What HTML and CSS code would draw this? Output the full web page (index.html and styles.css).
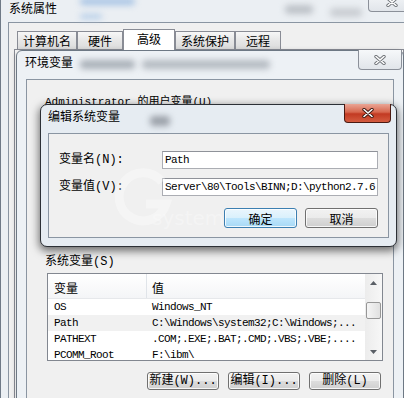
FILE: index.html
```html
<!DOCTYPE html>
<html lang="zh-CN">
<head>
  <meta charset="UTF-8">
  <title>编辑系统变量</title>
  <link rel="stylesheet" href="styles.css">
</head>
<body>
  <!-- 系统属性 -->
  <div class="win sys">
    <div class="titlebar">
      <span class="glass g-sys1"></span>
      <span class="glass g-sys2"></span>
      <span class="glass g-sys3"></span>
      <span class="glass g-sys4"></span>
      <span class="title">系统属性</span>
      <button class="close-btn">
        <svg class="x-icon" viewBox="0 0 12 10"><path class="x-out" d="M2 1.5L10 8.5M10 1.5L2 8.5"/><path class="x-in" d="M2 1.5L10 8.5M10 1.5L2 8.5"/></svg>
      </button>
    </div>
    <div class="client">
      <div class="tabs">
        <span class="tab">计算机名</span>
        <span class="tab">硬件</span>
        <span class="tab active">高级</span>
        <span class="tab">系统保护</span>
        <span class="tab">远程</span>
      </div>
      <div class="tab-panel"></div>
    </div>
  </div>

  <!-- 环境变量 -->
  <div class="win env">
    <div class="titlebar">
      <span class="glass g-env1"></span>
      <span class="glass g-env2"></span>
      <span class="title">环境变量</span>
      <button class="close-btn">
        <svg class="x-icon" viewBox="0 0 12 10"><path class="x-out" d="M2 1.5L10 8.5M10 1.5L2 8.5"/><path class="x-in" d="M2 1.5L10 8.5M10 1.5L2 8.5"/></svg>
      </button>
    </div>
    <div class="client">
      <div class="user-group">Administrator 的用户变量(U)</div>

      <div class="group-label">系统变量(S)</div>
      <div class="listview">
        <div class="lv-body">
          <div class="lv-head"><span class="col1">变量</span><span class="col2">值</span></div>
          <div class="lv-row"><span class="col1 mono">OS</span><span class="col2 mono">Windows_NT</span></div>
          <div class="lv-row hover"><span class="col1 mono">Path</span><span class="col2 mono">C:\Windows\system32;C:\Windows;...</span></div>
          <div class="lv-row"><span class="col1 mono">PATHEXT</span><span class="col2 mono">.COM;.EXE;.BAT;.CMD;.VBS;.VBE;....</span></div>
          <div class="lv-row"><span class="col1 mono">PCOMM_Root</span><span class="col2 mono">F:\ibm\</span></div>
        </div>
        <div class="scrollbar">
          <span class="sb-arrow"><svg width="7" height="4" viewBox="0 0 7 4"><path d="M3.5 0L7 4H0z"/></svg></span>
          <span class="sb-thumb"></span>
          <span class="sb-space"></span>
          <span class="sb-arrow"><svg width="7" height="4" viewBox="0 0 7 4"><path d="M0 0H7L3.5 4z"/></svg></span>
        </div>
      </div>
      <div class="btn-row">
        <button class="btn">新建(W)...</button>
        <button class="btn">编辑(I)...</button>
        <button class="btn">删除(L)</button>
      </div>
    </div>
  </div>

  <!-- 编辑系统变量 -->
  <div class="win edit">
    <div class="titlebar">
      <span class="glass g-edit1"></span>
      <span class="title">编辑系统变量</span>
      <button class="close-btn red">
        <svg class="x-icon" viewBox="0 0 12 10"><path class="x-out" d="M2 1.5L10 8.5M10 1.5L2 8.5"/><path class="x-in" d="M2 1.5L10 8.5M10 1.5L2 8.5"/></svg>
      </button>
    </div>
    <div class="client form">
      <div class="field">
        <label>变量名(N):</label>
        <div class="input mono">Path</div>
      </div>
      <div class="field">
        <label>变量值(V):</label>
        <div class="input mono">Server\80\Tools\BINN;D:\python2.7.6</div>
      </div>
      <div class="dlg-buttons">
        <button class="btn default">确定</button>
        <button class="btn">取消</button>
      </div>
    </div>
  </div>

  <!-- faint site watermark -->
  <div class="watermark">
    <svg class="wm-logo" width="64" height="64" viewBox="0 0 64 64"><path d="M50 16A24 24 0 1 0 54 38H34"/></svg>
    <span class="wm-text">system</span>
  </div>
</body>
</html>
```

FILE: styles.css
```css
* {
  box-sizing: border-box;
}
body {
  margin: 0;
  width: 404px;
  height: 398px;
  overflow: hidden;
  position: relative;
  background: #dde3ea;
  font-family: "Noto Sans CJK SC", sans-serif;
  font-size: 12px;
  color: #000;
}
button {
  font-size: 12px;
  color: #000;
}
/* labels mixing chinese and ascii: ascii gets the monospace look */
.user-group, .group-label, .field label, .btn-row .btn {
  font-family: "Liberation Mono", "Noto Sans CJK SC", monospace;
}
.mono {
  font-family: "Liberation Mono", "Noto Sans CJK SC", monospace;
  font-size: 11px;
  letter-spacing: -0.6px;
}

/* windows */
.win {
  position: absolute;
  display: flex;
  flex-direction: column;
}
.titlebar {
  position: relative;
  flex: none;
  display: flex;
}
.title {
  position: relative;
  line-height: 14px;
  white-space: nowrap;
}
.client {
  flex: 1;
  min-height: 0;
  border: 1px solid #8a95a2;
  background: #f0f0f0;
  display: flex;
  flex-direction: column;
}
.glass {
  position: absolute;
  filter: blur(3px);
  border-radius: 4px;
}

.close-btn {
  position: absolute;
  top: -1px;
  display: flex;
  align-items: center;
  justify-content: center;
  padding: 0;
  border: 1px solid #8b9099;
  border-top: none;
  border-radius: 0 0 4px 4px;
  background: linear-gradient(#f6f8fa, #e1e5ea);
}
.x-icon {
  width: 12px;
  height: 10px;
  fill: none;
  stroke-linecap: round;
}
.x-out {
  stroke: #6f7378;
  stroke-width: 3.4;
}
.x-in {
  stroke: #fff;
  stroke-width: 1.6;
}
.close-btn.red {
  border-color: #4a1a12;
  background: linear-gradient(#eaa595, #d7684f 45%, #c23a22 55%, #d45c40);
}
.close-btn.red .x-out {
  stroke: #3a1610;
}

/* 系统属性 */
.sys {
  left: 0;
  top: -8px;
  width: 418px;
  height: 420px;
  border: 1px solid #6f7a87;
  border-radius: 6px;
  background: #ebeff3;
  padding: 0 7px 7px;
}
.sys .titlebar {
  height: 29px;
  align-items: center;
}
.sys .title {
  margin-left: 1px;
}
.sys .close-btn {
  right: -5px;
  width: 47px;
  height: 20px;
}
.g-sys1 { left: 72px; top: 5px; width: 55px; height: 7px; background: #a6c3e4; }
.g-sys2 { left: 72px; top: 21px; width: 22px; height: 5px; background: #b3cce8; }
.g-sys3 { left: 277px; top: 12px; width: 28px; height: 9px; background: #bcc1c7; }
.g-sys4 { left: 322px; top: 15px; width: 32px; height: 9px; background: #c9cdd2; }

.tabs {
  display: flex;
  align-items: flex-end;
  height: 27px;
  padding-left: 8px;
}
.tab {
  height: 19px;
  min-width: 46px;
  padding: 0 5px;
  border: 1px solid #898c95;
  border-bottom: none;
  line-height: 18px;
  text-align: center;
  background: linear-gradient(#f7f7f7, #e6e6e6 50%, #dadada);
}
.tab.active {
  position: relative;
  z-index: 1;
  height: 21px;
  padding: 0 13px 2px;
  background: #fff;
}
.tab-panel {
  flex: 1;
  margin: -1px 5px 0;
  border: 1px solid #898c95;
  background: #fcfcfc;
}

/* 环境变量 */
.env {
  left: 16px;
  top: 50px;
  width: 388px;
  height: 360px;
  border: 1px solid #6d7884;
  border-radius: 6px 6px 0 0;
  background: #edf1f5;
  padding: 0 9px;
  box-shadow: -1px 0 4px rgba(0, 0, 0, 0.15);
}
.env .titlebar {
  height: 28px;
  padding-top: 4px;
}
.env .title {
  margin-left: -1px;
}
.env .close-btn {
  right: -8px;
  width: 44px;
  height: 20px;
}
.g-env1 { left: 54px; top: 9px; width: 55px; height: 9px; background: #a9b0b8; }
.g-env2 { left: 116px; top: 9px; width: 128px; height: 9px; background: #b4bac1; }

.user-group {
  height: 158px;
  margin-top: 16px;
  padding-left: 18px;
  font-size: 11px;
  line-height: 12px;
  white-space: nowrap;
}
.group-label {
  padding-left: 18px;
  line-height: 16px;
}
.listview {
  display: flex;
  width: 336px;
  height: 88px;
  margin: 3px 0 0 20px;
  border: 1px solid #828790;
  background: #fff;
  overflow: hidden;
}
.lv-body {
  flex: 1;
  min-width: 0;
}
.lv-head {
  display: flex;
  height: 25px;
  background: linear-gradient(#fff, #f4f5f7);
  border-bottom: 1px solid #e6e8eb;
}
.lv-head span {
  display: flex;
  align-items: center;
  padding-top: 3px;
}
.lv-head .col1 {
  border-right: 1px solid #e0e4e9;
}
.col1 {
  flex: none;
  width: 99px;
  padding-left: 6px;
}
.col2 {
  padding-left: 5px;
}
.lv-row {
  display: flex;
  height: 16px;
  line-height: 16px;
  white-space: nowrap;
}
.lv-row.hover {
  background: #f1f1f1;
}
.scrollbar {
  flex: none;
  width: 17px;
  display: flex;
  flex-direction: column;
  align-items: center;
  background: linear-gradient(90deg, #ececec, #f7f7f7);
}
.sb-arrow {
  width: 17px;
  height: 17px;
  display: flex;
  align-items: center;
  justify-content: center;
  fill: #5a5f66;
}
.sb-thumb {
  width: 15px;
  height: 17px;
  margin-top: 11px;
  border: 1px solid #979797;
  border-radius: 2px;
  background: linear-gradient(90deg, #f5f5f5, #e0e0e0);
}
.sb-space {
  flex: 1;
}

.btn-row {
  display: flex;
  gap: 9px;
  margin: 11px 0 0 120px;
}
.btn {
  width: 72px;
  height: 18px;
  padding: 0;
  border: 1px solid #707070;
  border-radius: 3px;
  line-height: 15px;
  background: linear-gradient(#f2f2f2, #ebebeb 50%, #dddddd 51%, #cfcfcf);
  box-shadow: inset 0 0 0 1px rgba(255, 255, 255, 0.8);
  white-space: nowrap;
  font-family: "Noto Sans CJK SC", sans-serif;
}

/* 编辑系统变量 */
.edit {
  left: 40px;
  top: 104px;
  width: 357px;
  height: 143px;
  border: 1px solid #2c3036;
  border-radius: 7px;
  background: #e6ecf2;
  padding: 0 7px 8px;
  box-shadow: 0 3px 9px 1px rgba(0, 0, 0, 0.55);
}
.edit .titlebar {
  height: 28px;
  padding-top: 5px;
}
.edit .title {
  line-height: 12px;
}
.edit .close-btn {
  right: -2px;
  width: 47px;
  height: 19px;
}
.g-edit1 { left: 102px; top: 11px; width: 20px; height: 10px; background: #9aa0a8; }

.form {
  padding: 17px 10px 0;
}
.field {
  display: flex;
  align-items: center;
  height: 18px;
}
.field + .field {
  margin-top: 9px;
}
.field label {
  width: 103px;
  flex: none;
  line-height: 14px;
}
.input {
  width: 217px;
  height: 18px;
  padding: 0 2px;
  border: 1px solid #abadb3;
  border-top-color: #8f9299;
  background: #fff;
  line-height: 16px;
  white-space: nowrap;
  overflow: hidden;
}
.dlg-buttons {
  display: flex;
  justify-content: flex-end;
  gap: 8px;
  margin-top: 12px;
}
.dlg-buttons .btn {
  width: 73px;
  height: 20px;
  line-height: 17px;
}
.btn.default {
  border-color: #3c7fb1;
  background: linear-gradient(#eaf6fd, #d9f0fc 50%, #bee6fd 51%, #a7d9f5);
}

.watermark {
  position: absolute;
  left: 112px;
  top: 166px;
  pointer-events: none;
  color: rgba(255, 255, 255, 0.3);
  font-family: "DejaVu Sans", sans-serif;
}
.wm-logo {
  display: block;
  fill: none;
  stroke: rgba(255, 255, 255, 0.35);
  stroke-width: 9;
}
.wm-text {
  position: absolute;
  left: 40px;
  top: 40px;
  font-size: 20px;
}
```
